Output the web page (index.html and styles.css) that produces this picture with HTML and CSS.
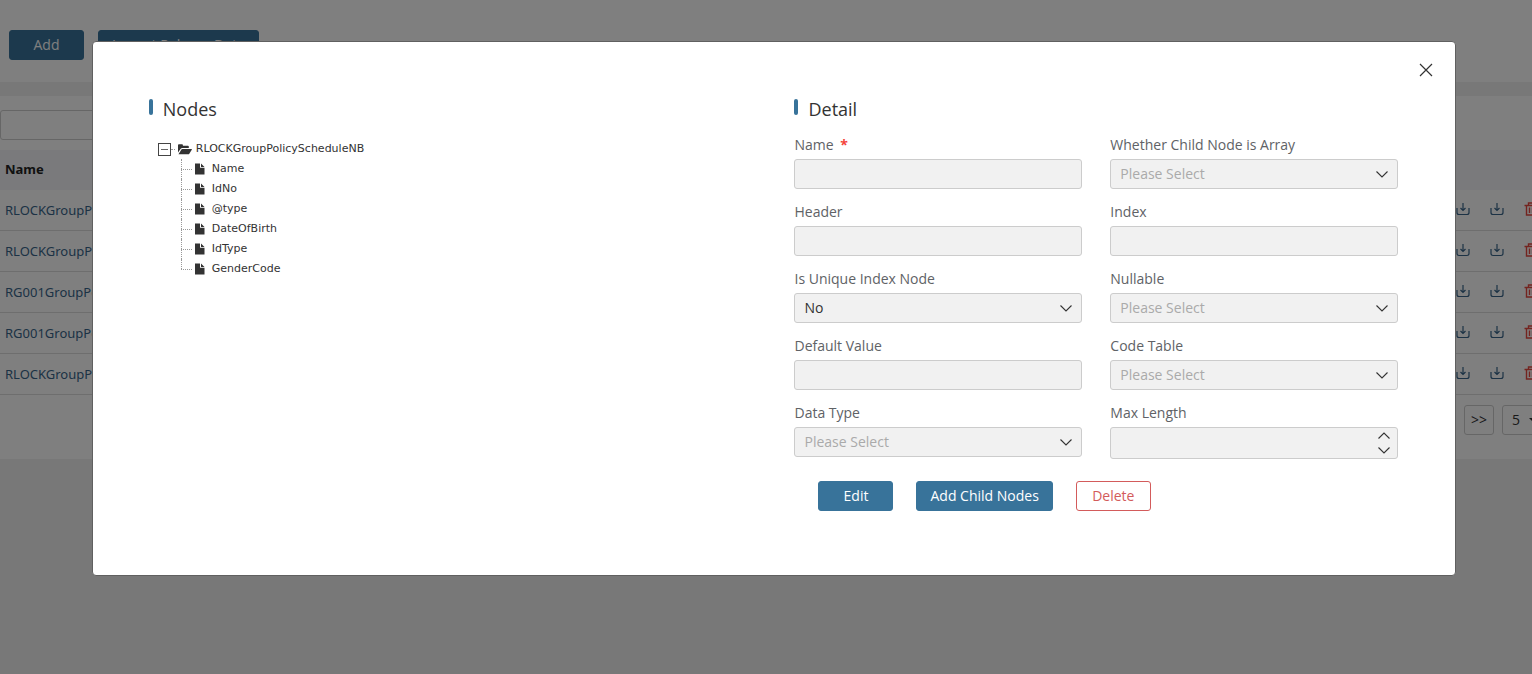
FILE: index.html
```html
<!DOCTYPE html>
<html lang="en">
<head>
  <meta charset="UTF-8" />
  <meta name="viewport" content="width=device-width, initial-scale=1.0"/>
  <title>Schedule Nodes</title>
  <link rel="stylesheet" href="styles.css">
</head>
<body>
  <svg class="sprite" aria-hidden="true">
    <symbol id="download" viewBox="0 0 14 14">
      <path d="M1 6v4.500a2 2 0 0 0 2 2h8a2 2 0 0 0 2-2V6M7 1v7.500M4.500 6 7 8.500 9.500 6" fill="none" stroke="currentColor" stroke-width="1.2"/>
    </symbol>
    <symbol id="trash" viewBox="0 0 14 14">
      <path d="M.5 3.500h13M4.500 3.500v-2.500h5v2.500M2.500 3.500v9.500h9v-9.500M5.500 5.500v5.500M8.500 5.500v5.500" fill="none" stroke="currentColor" stroke-width="1.4"/>
    </symbol>
    <symbol id="chevron" viewBox="0 0 12 7">
      <path d="M.5.5 6 6 11.500.5" fill="none" stroke="currentColor" stroke-width="1.1"/>
    </symbol>
    <symbol id="folder" viewBox="0 0 14 11">
      <path d="M0 8.500V1.200Q0 .3.900.3h3.200q.8 0 .8.900v.5h5q.9 0 .9.900v1.400H4.200Q3.300 4 2.700 4.700z" fill="currentColor"/>
      <path d="M.5 10.300 3.400 5.600q.4-.6 1-.6h9q.8 0 .4.700l-2.500 4q-.4.600-1.200.6z" fill="currentColor"/>
    </symbol>
    <symbol id="file" viewBox="0 0 10 12">
      <path d="M0 .5h5v4.200h4.500V11.500H0zM6 .5l3.500 3.400H6z" fill="currentColor"/>
    </symbol>
  </svg>

  <main class="page">
    <section class="toolbar">
      <button class="btn btn-primary">Add</button>
      <button class="btn btn-primary">Import Release Data</button>
    </section>

    <section class="list">
      <div class="search">
        <input type="text" aria-label="Search by name">
      </div>
      <table>
        <thead>
          <tr><th>Name</th><th></th></tr>
        </thead>
        <tbody>
          <tr>
            <td><a href="#">RLOCKGroupPolicyScheduleNB</a></td>
            <td class="actions"><div>
              <button aria-label="Download"><svg><use href="#download"/></svg></button>
              <button aria-label="Export"><svg><use href="#download"/></svg></button>
              <button class="remove" aria-label="Delete"><svg><use href="#trash"/></svg></button>
            </div></td>
          </tr>
          <tr>
            <td><a href="#">RLOCKGroupPolicyScheduleNB</a></td>
            <td class="actions"><div>
              <button aria-label="Download"><svg><use href="#download"/></svg></button>
              <button aria-label="Export"><svg><use href="#download"/></svg></button>
              <button class="remove" aria-label="Delete"><svg><use href="#trash"/></svg></button>
            </div></td>
          </tr>
          <tr>
            <td><a href="#">RG001GroupPolicySchedule</a></td>
            <td class="actions"><div>
              <button aria-label="Download"><svg><use href="#download"/></svg></button>
              <button aria-label="Export"><svg><use href="#download"/></svg></button>
              <button class="remove" aria-label="Delete"><svg><use href="#trash"/></svg></button>
            </div></td>
          </tr>
          <tr>
            <td><a href="#">RG001GroupPolicySchedule</a></td>
            <td class="actions"><div>
              <button aria-label="Download"><svg><use href="#download"/></svg></button>
              <button aria-label="Export"><svg><use href="#download"/></svg></button>
              <button class="remove" aria-label="Delete"><svg><use href="#trash"/></svg></button>
            </div></td>
          </tr>
          <tr>
            <td><a href="#">RLOCKGroupPolicyScheduleNB</a></td>
            <td class="actions"><div>
              <button aria-label="Download"><svg><use href="#download"/></svg></button>
              <button aria-label="Export"><svg><use href="#download"/></svg></button>
              <button class="remove" aria-label="Delete"><svg><use href="#trash"/></svg></button>
            </div></td>
          </tr>
        </tbody>
      </table>
      <div class="pagination">
        <button>&gt;</button>
        <button>&gt;&gt;</button>
        <div class="page-size">
          <select aria-label="Rows per page"><option>5</option></select>
          <span class="caret"></span>
        </div>
      </div>
    </section>
  </main>

  <div class="overlay">
    <div class="modal" role="dialog" aria-label="Nodes">
      <button class="close" aria-label="Close">
        <svg viewBox="0 0 14 14"><path d="M1 1l12 12M13 1 1 13" stroke="currentColor" stroke-width="1.2"/></svg>
      </button>

      <section>
        <h2>Nodes</h2>
        <div class="tree">
          <div class="tree-root">
            <button class="toggle" aria-label="Collapse"></button>
            <span class="link"></span>
            <svg class="folder"><use href="#folder"/></svg>
            <span>RLOCKGroupPolicyScheduleNB</span>
          </div>
          <ul>
            <li><svg><use href="#file"/></svg>Name</li>
            <li><svg><use href="#file"/></svg>IdNo</li>
            <li><svg><use href="#file"/></svg>@type</li>
            <li><svg><use href="#file"/></svg>DateOfBirth</li>
            <li><svg><use href="#file"/></svg>IdType</li>
            <li><svg><use href="#file"/></svg>GenderCode</li>
          </ul>
        </div>
      </section>

      <section>
        <h2>Detail</h2>
        <form>
          <div class="fields">
            <div class="field">
              <label for="name">Name <span class="required">*</span></label>
              <input type="text" id="name" disabled>
            </div>
            <div class="field">
              <label for="isArray">Whether Child Node is Array</label>
              <div class="select">
                <select id="isArray" disabled><option>Please Select</option></select>
                <svg><use href="#chevron"/></svg>
              </div>
            </div>
            <div class="field">
              <label for="header">Header</label>
              <input type="text" id="header" disabled>
            </div>
            <div class="field">
              <label for="index">Index</label>
              <input type="text" id="index" disabled>
            </div>
            <div class="field">
              <label for="uniqueIndex">Is Unique Index Node</label>
              <div class="select">
                <select class="filled" id="uniqueIndex" disabled><option>No</option></select>
                <svg><use href="#chevron"/></svg>
              </div>
            </div>
            <div class="field">
              <label for="nullable">Nullable</label>
              <div class="select">
                <select id="nullable" disabled><option>Please Select</option></select>
                <svg><use href="#chevron"/></svg>
              </div>
            </div>
            <div class="field">
              <label for="defaultValue">Default Value</label>
              <input type="text" id="defaultValue" disabled>
            </div>
            <div class="field">
              <label for="codeTable">Code Table</label>
              <div class="select">
                <select id="codeTable" disabled><option>Please Select</option></select>
                <svg><use href="#chevron"/></svg>
              </div>
            </div>
            <div class="field">
              <label for="dataType">Data Type</label>
              <div class="select">
                <select id="dataType" disabled><option>Please Select</option></select>
                <svg><use href="#chevron"/></svg>
              </div>
            </div>
            <div class="field">
              <label for="maxLength">Max Length</label>
              <div class="spinner">
                <input type="text" inputmode="numeric" id="maxLength" disabled>
                <div class="steps">
                  <button type="button" class="up" aria-label="Increase"><svg><use href="#chevron"/></svg></button>
                  <button type="button" aria-label="Decrease"><svg><use href="#chevron"/></svg></button>
                </div>
              </div>
            </div>
          </div>
          <div class="buttons">
            <button type="button" class="btn btn-primary">Edit</button>
            <button type="button" class="btn btn-primary">Add Child Nodes</button>
            <button type="button" class="btn btn-danger">Delete</button>
          </div>
        </form>
      </section>
    </div>
  </div>
</body>
</html>
```
FILE: styles.css
```css
* {
  box-sizing: border-box;
}

body {
  margin: 0;
  min-height: 100vh;
  font-family: "Open Sans", "Noto Sans", sans-serif;
  font-size: 14px;
  line-height: 20px;
  color: #333;
  background-color: #f0f0f0;
  overflow: hidden;
}

button,
input,
select {
  font: inherit;
}

button {
  cursor: pointer;
}

.sprite {
  display: none;
}

.btn {
  min-width: 75px;
  height: 30px;
  padding: 0 13px;
  border: 1px solid #38739a;
  border-radius: 3px;
}

.btn-primary {
  background-color: #38739a;
  color: #fff;
}

.btn-danger {
  background-color: #fff;
  border-color: #d35b5b;
  color: #d35b5b;
}

/* list page */
.page {
  display: flex;
  flex-direction: column;
  gap: 14px;
}

.toolbar {
  display: flex;
  gap: 14px;
  padding: 30px 9px 22px;
  background-color: #fff;
}

.list {
  padding: 14px 0 24px;
  background-color: #fff;
}

.search {
  padding-bottom: 10px;
}

.search input {
  display: block;
  width: 200px;
  height: 30px;
  border: 1px solid #ccc;
  border-radius: 3px;
}

table {
  width: calc(100% + 22px);
  border-spacing: 0;
  font-family: "Noto Sans", "Open Sans", sans-serif;
  font-size: 13px;
}

th {
  height: 40px;
  padding: 0 5px 2px;
  text-align: left;
  color: #222;
  background-color: #f4f5f8;
}

td {
  height: 41px;
  padding: 0 5px;
  border-bottom: 1px solid #ddd;
}

td a {
  color: #38658a;
  text-decoration: none;
}

.actions div {
  display: flex;
  justify-content: flex-end;
  gap: 20px;
  padding: 0 11px 3px 0;
}

.actions button {
  padding: 0;
  border: 0;
  background: none;
  color: #38658a;
}

.actions .remove {
  color: #e8483f;
}

.actions svg {
  display: block;
  width: 14px;
  height: 14px;
}

.pagination {
  display: flex;
  justify-content: flex-end;
  gap: 8px;
  width: calc(100% + 22px);
  padding-top: 10px;
}

.pagination button,
.pagination select {
  min-width: 30px;
  height: 30px;
  padding: 0;
  border: 1px solid #ccc;
  border-radius: 3px;
  background-color: #fff;
  color: #333;
}

.page-size {
  position: relative;
}

.pagination select {
  width: 52px;
  padding-left: 9px;
  appearance: none;
}

.caret {
  position: absolute;
  top: 13px;
  right: 17px;
  border: 4px solid transparent;
  border-top-color: #333;
}

/* modal */
.overlay {
  position: fixed;
  inset: 0;
  padding: 41px 0 0 16px;
  background-color: rgba(0, 0, 0, 0.5);
}

.modal {
  position: relative;
  display: grid;
  grid-template-columns: 1fr 1fr;
  gap: 42px;
  width: 90%;
  margin: 0 auto;
  padding: 55px 57px 64px 56px;
  border: 1px solid #606060;
  border-radius: 4px;
  background-color: #fff;
}

.close {
  position: absolute;
  top: 18px;
  right: 19px;
  width: 20px;
  height: 20px;
  padding: 3px;
  border: 0;
  background: none;
  color: #333;
}

.close svg {
  display: block;
}

h2 {
  display: flex;
  align-items: center;
  gap: 10px;
  margin: 0 0 13px;
  font-size: 18px;
  font-weight: 400;
  line-height: 25px;
}

h2::before {
  content: "";
  width: 4px;
  height: 16px;
  margin-bottom: 5px;
  border-radius: 2px;
  background-color: #38739a;
}

.tree {
  padding: 4px 0 0 9px;
  font-family: Verdana, "DejaVu Sans", sans-serif;
  font-size: 11px;
}

.tree-root {
  display: flex;
  align-items: center;
}

.toggle {
  display: flex;
  align-items: center;
  justify-content: center;
  width: 13px;
  height: 13px;
  padding: 0;
  border: 1px solid #444;
  background: none;
}

.toggle::before {
  content: "";
  width: 7px;
  height: 1px;
  background-color: #666;
}

.link {
  width: 4px;
  margin-right: 3px;
  border-top: 1px dotted #999;
}

.folder {
  width: 14px;
  height: 11px;
  margin-right: 4px;
}

.tree ul {
  margin: 0;
  padding: 0 0 0 23px;
  list-style: none;
}

.tree li {
  position: relative;
  display: flex;
  align-items: center;
  gap: 7px;
  padding-left: 14px;
}

/* dotted connectors */
.tree li::before {
  content: "";
  position: absolute;
  top: 0;
  left: 0;
  height: 100%;
  border-left: 1px dotted #999;
}

.tree li:last-child::before {
  height: 50%;
}

.tree li::after {
  content: "";
  position: absolute;
  top: 50%;
  left: 0;
  width: 11px;
  border-top: 1px dotted #999;
}

.tree li svg {
  width: 10px;
  height: 12px;
}

.fields {
  display: grid;
  grid-template-columns: 1fr 1fr;
  gap: 13px 28px;
}

.field label {
  display: block;
  margin-bottom: 4px;
  color: #606266;
}

.required {
  margin-left: 3px;
  font-weight: 700;
  color: #f4433c;
}

.field input,
.field select {
  display: block;
  width: 100%;
  height: 30px;
  padding: 0 9px;
  border: 1px solid #ccc;
  border-radius: 3px;
  background-color: #f1f1f1;
  color: #aaa;
  opacity: 1;
  appearance: none;
}

.field .filled {
  color: #333;
}

.select,
.spinner {
  position: relative;
}

.select svg {
  position: absolute;
  top: 12px;
  right: 10px;
  width: 12px;
  height: 7px;
}

.field .spinner input {
  height: 32px;
}

.steps {
  position: absolute;
  top: 5px;
  right: 8px;
  display: flex;
  flex-direction: column;
  gap: 8px;
}

.steps button {
  padding: 0;
  border: 0;
  background: none;
  color: #333;
}

.steps svg {
  display: block;
  width: 12px;
  height: 7px;
}

.steps .up {
  transform: rotate(180deg);
}

.buttons {
  display: flex;
  gap: 23px;
  padding: 22px 24px 0;
}
```
